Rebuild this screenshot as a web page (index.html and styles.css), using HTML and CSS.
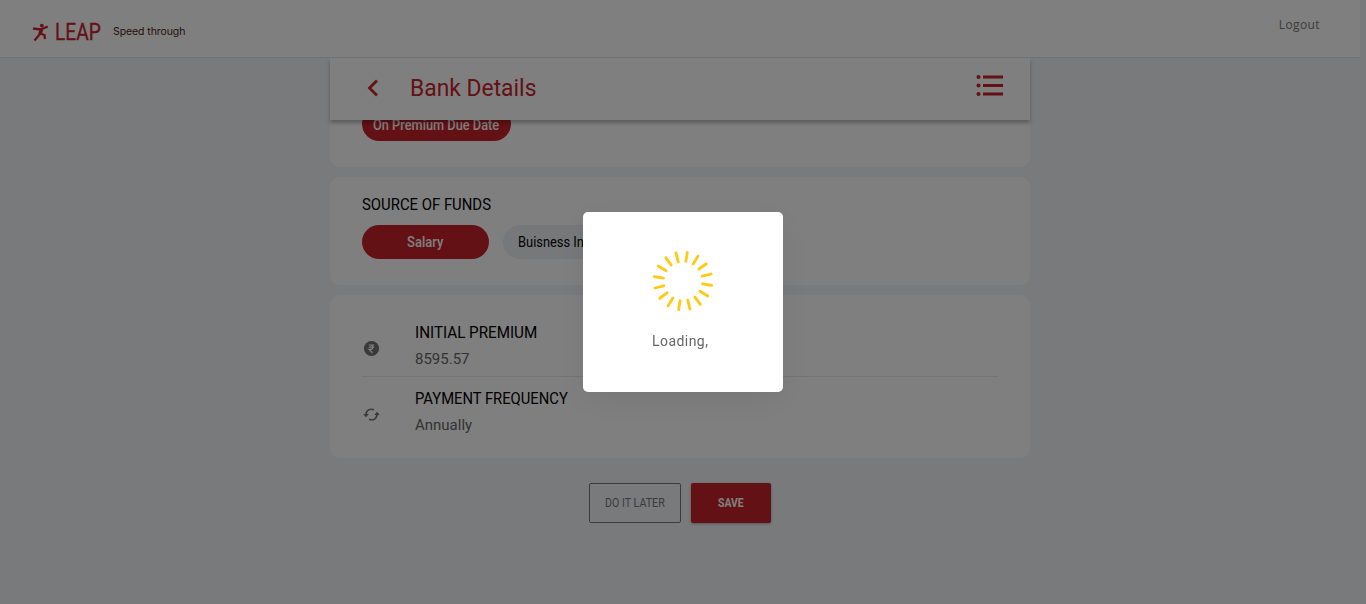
FILE: index.html
```html
<!DOCTYPE html>
<html lang="en">
<head>
<meta charset="utf-8">
<title>Bank Details</title>
<link rel="stylesheet" href="styles.css">
</head>
<body>
<header class="header">
  <svg class="runner" width="17" height="19" viewBox="0 0 17 19"><circle cx="9.800" cy="2.600" r="1.900"/><path d="M1 5.500 8.500 6.500 15.800 3.500M9.500 6 8 11 2.500 17.500M8 10.500l4.500 1.500 .5 4"/><path class="torso" d="M9.500 6 8 11.500"/></svg>
  <span class="brand"><span class="fit fit-brand">LEAP</span></span>
  <span class="tagline">Speed through</span>
  <a class="logout">Logout</a>
</header>
<main class="column">
  <div class="titlebar">
    <svg class="back" width="12" height="18" viewBox="0 0 12 18"><path d="M10 1.500 2.500 9l7.500 7.500"/></svg>
    <h1 class="title"><span class="fit fit-title">Bank Details</span></h1>
    <svg class="menu" width="28" height="22" viewBox="0 0 28 22"><circle cx="2.500" cy="2" r="2"/><circle cx="2.500" cy="10.500" r="2"/><circle cx="2.500" cy="19" r="2"/><path d="M7 .5h20v3H7zM7 9h20v3H7zM7 17.500h20v3H7z"/></svg>
  </div>
  <section class="card card-due">
    <div class="pill pill-on pill-due"><span class="fit fit-due">On Premium Due Date</span></div>
  </section>
  <section class="card card-funds">
    <h2 class="label"><span class="fit fit-funds">SOURCE OF FUNDS</span></h2>
    <div class="pills">
      <div class="pill pill-on pill-salary"><span class="fit fit-salary">Salary</span></div>
      <div class="pill pill-business"><span class="fit fit-business">Buisness Income</span></div>
    </div>
  </section>
  <section class="card card-summary">
    <div class="row">
      <svg class="row-icon" width="17" height="17" viewBox="0 0 17 17"><circle cx="8.500" cy="8.500" r="7.600" fill="#747474"/><path d="M5.800 5h5.400M5.800 7.200h5.400M6 5h1.500c3 0 3 4.400 0 4.400H6l3.500 3.400" fill="none" stroke="#fff" stroke-width="1.200"/></svg>
      <div class="row-text"><h2 class="label"><span class="fit fit-initial">INITIAL PREMIUM</span></h2><p class="value">8595.57</p></div>
    </div>
    <div class="row row-last">
      <svg class="row-icon" width="17" height="17" viewBox="0 0 17 17"><path d="M3 9.500C2.500 5 6.500 1.800 11 3.800M14 7.500c.5 4.500-3.500 7.700-8 5.700" fill="none" stroke="#747474" stroke-width="1.500"/><path d="M.2 8h5.600L3 11.200zM11.200 9h5.600L14 5.800z" fill="#747474"/></svg>
      <div class="row-text"><h2 class="label"><span class="fit fit-frequency">PAYMENT FREQUENCY</span></h2><p class="value">Annually</p></div>
    </div>
  </section>
  <div class="actions">
    <button class="btn btn-later"><span class="fit fit-later">DO IT LATER</span></button>
    <button class="btn btn-save"><span class="fit fit-save">SAVE</span></button>
  </div>
</main>
<div class="overlay">
  <div class="dialog">
    <svg class="spinner" width="62" height="62" viewBox="-31 -31 62 62">
      <g transform="rotate(8.500)"><g id="q"><path id="t" d="M0-29V-19.800"/><use href="#t" transform="rotate(22.500)"/><use href="#t" transform="rotate(45)"/><use href="#t" transform="rotate(67.500)"/></g><use href="#q" transform="rotate(90)"/><use href="#q" transform="rotate(180)"/><use href="#q" transform="rotate(270)"/></g>
    </svg>
    <p class="loading">Loading,</p>
  </div>
</div>
</body>
</html>
```
FILE: styles.css
```css
* { box-sizing: border-box; }
body { margin: 0; height: 604px; overflow: hidden; background: #f1f4f8; font-family: Roboto, "Liberation Sans", sans-serif; color: #000; }
h1, h2, p { margin: 0; font-weight: 400; }
.header { width: 1360px; height: 58px; background: #fff; border-bottom: 1px solid #e4e6ea; display: flex; align-items: flex-start; padding: 0 40px 0 32px; }
.runner { margin-top: 23px; fill: #c8232c; }
.runner path { fill: none; stroke: #c8232c; stroke-width: 2.3; }
.runner .torso { stroke-width: 3.6; }
.brand { width: 64px; flex: none; padding-left: 6px; margin-top: 20px; font-size: 23px; line-height: 26px; color: #c8232c; }
.tagline { font: 10.5px/16px Inter, "Open Sans", sans-serif; margin-top: 24px; color: #4d2020; letter-spacing: -.08px; }
.logout { margin: 17px 0 0 auto; font: 12px/16px "Open Sans", sans-serif; letter-spacing: .4px; color: #777; }
.fit { display: inline-block; white-space: nowrap; transform-origin: left center; }
.fit-brand { transform: scaleX(.835); -webkit-text-stroke: .3px; }
.fit-title { transform: scaleX(.952); }
.fit-due { transform: scaleX(.913); }
.fit-funds { transform: scaleX(.93); }
.fit-salary { transform: scaleX(.93); }
.fit-business { transform: scaleX(.92); }
.fit-initial { transform: scaleX(.95); }
.fit-frequency { transform: scaleX(.923); }
.fit-later { transform: scaleX(.89); }
.fit-save { transform: scaleX(.87); }
.column { width: 700px; margin-left: 330px; }
.titlebar { height: 62px; background: #fff; position: relative; z-index: 1; display: flex; align-items: flex-start; box-shadow: 0 3px 4px rgba(0,0,0,.28); padding: 0 26px 0 37px; }
.back { margin-top: 21px; fill: none; stroke: #c8232c; stroke-width: 2.8; }
.title { margin: 14px 0 0 31px; font-size: 24px; line-height: 32px; color: #c8232c; }
.menu { margin: 17px 0 0 auto; fill: #c8232c; }
.card { background: #fff; border-radius: 10px; padding: 0 32px; margin-bottom: 10px; }
.card-due { height: 47px; border-radius: 0 0 10px 10px; display: flex; align-items: flex-start; }
.card-funds { height: 108px; padding-top: 17px; }
.card-summary { height: 163px; padding-top: 15px; margin-bottom: 25px; }
.pill { height: 34px; border-radius: 17px; font-size: 14px; line-height: 34px; background: #eef1f5; }
.pill-on { background: #c8232c; color: #fff; font-weight: 500; }
.pill-due { width: 149px; margin-top: -13px; padding-left: 11px; line-height: 36px; }
.pills { display: flex; gap: 14px; margin-top: 9px; }
.pill-salary { width: 127px; padding-left: 45px; }
.pill-business { width: 140px; padding-left: 15px; }
.label { font-size: 16px; line-height: 22px; }
.row { height: 67px; display: flex; align-items: center; border-bottom: 1px solid #e4e6ea; }
.row-last { height: 65px; border: 0; }
.row-icon { margin: 10px 0 0 1px; }
.row-text { margin-left: 35px; padding-top: 4px; }
.value { font-size: 15px; line-height: 20px; margin-top: 5px; color: #666; }
.actions { display: flex; justify-content: center; gap: 10px; }
.btn { height: 40px; border-radius: 2px; padding: 0; font: 12px/16px Roboto, sans-serif; text-align: left; }
.btn-later { width: 92px; border: 1px solid #777; color: #777; background: transparent; padding-left: 15px; }
.btn-save { width: 80px; border: 0; background: #c8232c; color: #fff; font-weight: 700; padding-left: 27px; box-shadow: 0 1px 3px rgba(0,0,0,.3); }
.overlay { position: fixed; inset: 0; z-index: 2; background: rgba(0,0,0,.5); display: flex; align-items: center; justify-content: center; }
.dialog { width: 200px; height: 180px; background: #fff; border-radius: 5px; box-shadow: 0 8px 32px rgba(0,0,0,.07); padding-top: 38px; }
.spinner { display: block; margin-left: 69px; fill: none; stroke: #ffc914; stroke-width: 2.8; stroke-linecap: round; }
.loading { margin: 19px 0 0 69px; font-size: 14px; line-height: 20px; letter-spacing: .45px; color: #666; }
```
